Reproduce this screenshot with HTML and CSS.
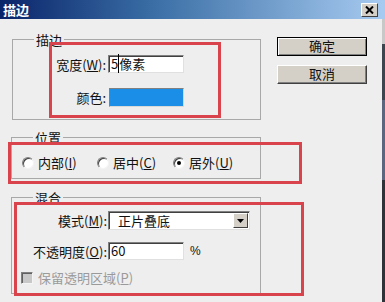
FILE: index.html
```html
<!DOCTYPE html>
<html>
<head>
<meta charset="utf-8">
<link rel="stylesheet" href="styles.css">
</head>
<body>
<div class="screen">
  <div class="dialog">
    <div class="titlebar">
      <span class="title">描边</span>
      <span class="close"><svg width="9" height="8" viewBox="0 0 9 8"><path d="M1 0.5L8 7.5M8 0.5L1 7.5" stroke="#000" stroke-width="2"/></svg></span>
    </div>
    <div class="content">
      <div class="groups">
        <div class="group g1">
          <span class="legend">描边</span>
          <div class="form f1">
            <span class="label">宽度(<u>W</u>):</span>
            <div class="input"><span class="caret">5</span>像素</div>
            <span class="label">颜色:</span>
            <div class="swatch"></div>
          </div>
        </div>
        <div class="group g2">
          <span class="legend">位置</span>
          <div class="radios">
            <div class="radio-item w1"><span class="radio"></span><span>内部(<u>I</u>)</span></div>
            <div class="radio-item w2"><span class="radio"></span><span>居中(<u>C</u>)</span></div>
            <div class="radio-item"><span class="radio checked"></span><span>居外(<u>U</u>)</span></div>
          </div>
        </div>
        <div class="group g3">
          <span class="legend">混合</span>
          <div class="form f3">
            <span class="label">模式(<u>M</u>):</span>
            <div class="select"><span class="select-text">正片叠底</span><span class="drop"><svg width="7" height="4" viewBox="0 0 7 4"><path d="M0 0H7L3.5 4Z" fill="#000"/></svg></span></div>
            <span class="label">不透明度(<u>O</u>):</span>
            <div class="with-unit"><div class="input">60</div><span class="unit">%</span></div>
          </div>
          <div class="check-row"><span class="checkbox"></span><span class="disabled">保留透明区域(<u>P</u>)</span></div>
        </div>
      </div>
      <div class="buttons">
        <div class="btn default">确定</div>
        <div class="btn">取消</div>
      </div>
    </div>
    <div class="mark m1"></div>
    <div class="mark m2"></div>
    <div class="mark m3"></div>
  </div>
  <div class="strip">
    <div class="strip-a"></div>
    <div class="strip-d"></div>
    <div class="strip-b"></div>
    <div class="strip-c"></div>
  </div>
</div>
</body>
</html>
```
FILE: styles.css
```css
* { box-sizing: border-box; }
html, body { margin: 0; padding: 0; }
body {
  width: 385px;
  height: 302px;
  overflow: hidden;
  font-family: "Noto Sans CJK SC", "Noto Sans", sans-serif;
  font-size: 13px;
  color: #111;
  background: #eeeeee;
}
u { text-decoration: underline; text-underline-offset: 1px; }
.screen { display: flex; width: 385px; height: 302px; }
.dialog {
  position: relative;
  width: 382px;
  height: 302px;
  background: #eeeeee;
  display: flex;
  flex-direction: column;
}
.titlebar {
  height: 19px;
  background: linear-gradient(to right, #0a246a 0%, #3a6ea5 40%, #a6caf0 100%);
  display: flex;
  align-items: center;
  justify-content: space-between;
  padding: 0 4px 0 3px;
}
.title {
  color: #fff;
  font-weight: bold;
  font-size: 13px;
  line-height: 15px;
}
.close {
  width: 17px;
  height: 14px;
  background: #d4d0c8;
  border: 1px solid;
  border-color: #fff #404040 #404040 #fff;
  display: flex;
  align-items: center;
  justify-content: center;
}
.content {
  display: flex;
  align-items: flex-start;
}
.groups {
  width: 261px;
  display: flex;
  flex-direction: column;
}
.group {
  border: 1px solid #a8a8a8;
  display: flex;
  flex-direction: column;
  align-items: flex-start;
}
.legend {
  margin-top: -8px;
  margin-left: 21px;
  padding: 0 2px;
  background: #eeeeee;
  line-height: 15px;
  height: 15px;
}
.g1 { margin: 20px 0 0 12px; width: 249px; height: 81px; }
.g2 { margin: 17px 0 0 11px; width: 250px; height: 42px; }
.g3 { margin: 18px 0 0 11px; width: 250px; height: 97px; }

.form {
  display: grid;
  align-items: center;
}
.f1 {
  margin-top: 8px;
  grid-template-columns: 93px 77px;
  column-gap: 2px;
  row-gap: 15px;
}
.f3 {
  margin-top: 6px;
  grid-template-columns: 95px auto;
  column-gap: 1px;
  row-gap: 12px;
}
.label { text-align: right; line-height: 15px; white-space: nowrap; }
.input {
  width: 76px;
  height: 18px;
  background: #fff;
  border: 1px solid;
  border-color: #808080 #e0e0e0 #e0e0e0 #808080;
  box-shadow: inset 1px 1px 0 #404040;
  line-height: 15px;
  padding-left: 2px;
  white-space: nowrap;
}
.caret { border-right: 1px solid #000; }
.swatch {
  margin-left: 1px;
  width: 75px;
  height: 19px;
  background: #1b8fe8;
  border: 1px solid;
  border-color: #808080 #d8d8d8 #d8d8d8 #808080;
}
.radios {
  margin-top: 10px;
  padding-left: 10px;
  display: flex;
  align-items: center;
  line-height: 15px;
}
.radio-item { display: flex; align-items: center; gap: 4px; }
.w1 { width: 75px; }
.w2 { width: 76px; }
.radio {
  width: 12px;
  height: 12px;
  border-radius: 50%;
  background: #fff;
  border: 1px solid;
  border-color: #808080 #f4f4f4 #f4f4f4 #808080;
  box-shadow: inset 1px 1px 0 #404040;
  display: flex;
  align-items: center;
  justify-content: center;
}
.radio.checked::after {
  content: "";
  width: 4px;
  height: 4px;
  border-radius: 50%;
  background: #000;
}
.select {
  width: 142px;
  height: 19px;
  background: #fff;
  border: 1px solid;
  border-color: #808080 #e0e0e0 #e0e0e0 #808080;
  box-shadow: inset 1px 1px 0 #404040;
  display: flex;
  align-items: center;
  justify-content: space-between;
  padding: 1px;
}
.select-text { padding-left: 8px; line-height: 15px; }
.drop {
  width: 15px;
  height: 15px;
  background: #d4d0c8;
  border: 1px solid;
  border-color: #fff #404040 #404040 #fff;
  display: flex;
  align-items: center;
  justify-content: center;
}
.with-unit { display: flex; align-items: center; }
.unit { margin-left: 6px; font-family: "Liberation Sans", sans-serif; font-size: 12px; }
.check-row {
  margin-top: 10px;
  margin-left: 9px;
  display: flex;
  align-items: center;
  gap: 5px;
  line-height: 15px;
}
.checkbox {
  width: 12px;
  height: 12px;
  background: #c8c8c8;
  border: 1px solid;
  border-color: #808080 #f4f4f4 #f4f4f4 #808080;
  box-shadow: inset 1px 1px 0 #606060;
}
.disabled { color: #9a9a9a; }
.buttons {
  margin: 18px 0 0 16px;
  display: flex;
  flex-direction: column;
  gap: 9px;
}
.btn {
  width: 90px;
  height: 19px;
  background: #d4d0c8;
  border: 1px solid;
  border-color: #fff #404040 #404040 #fff;
  box-shadow: inset -1px -1px 0 #808080;
  text-align: center;
  line-height: 16px;
}
.btn.default {
  border-color: #000;
  box-shadow: inset 1px 1px 0 #fff, inset -1px -1px 0 #808080;
}
.mark {
  position: absolute;
  border: 3px solid #d9434b;
}
.m1 { left: 49px; top: 42px; width: 172px; height: 76px; }
.m2 { left: 8px; top: 142px; width: 294px; height: 42px; }
.m3 { left: 14px; top: 202px; width: 290px; height: 94px; }
.strip {
  width: 3px;
  height: 302px;
  background: #3d4550;
  display: flex;
  flex-direction: column;
}
.strip-a { height: 19px; background: #a6caf0; }
.strip-d { height: 25px; background: #c8c8c8; }
.strip-b { height: 80px; margin-top: 56px; background: #5a6680; }
.strip-c { flex: 1; background: #2e333a; }
```
